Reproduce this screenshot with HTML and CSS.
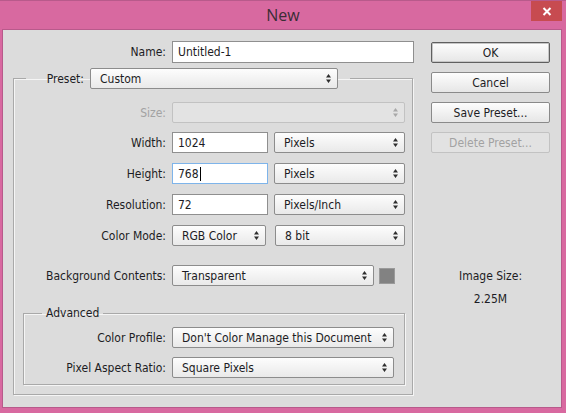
FILE: index.html
```html
<!DOCTYPE html>
<html>
<head>
<meta charset="utf-8">
<link rel="stylesheet" href="styles.css">
</head>
<body>
<div class="window">
  <div class="titlebar">
    <span></span>
    <span class="title">New</span>
    <button class="close" aria-label="Close"><svg width="10" height="9" viewBox="0 0 10 9"><path d="M1.5 1 L8.5 8 M8.5 1 L1.5 8" stroke="#fff" stroke-width="2" fill="none"/></svg></button>
  </div>
  <div class="client">
    <div class="main">
      <div class="row name-row">
        <span class="lbl lbl-name">Name:</span>
        <div class="input w-name">Untitled-1</div>
      </div>
      <fieldset class="group outer">
        <legend class="legend-preset">
          <span class="lbl-preset">Preset:</span>
          <div class="select w-preset"><span>Custom</span><svg class="arrow" width="5" height="9" viewBox="0 0 5 9"><path d="M0 3.5 L2.5 0 L5 3.5 Z M0 5.5 L2.5 9 L5 5.5 Z"/></svg></div>
        </legend>
        <div class="row r-size">
          <span class="lbl lbl-outer disabled">Size:</span>
          <div class="select w-size disabled"><span></span><svg class="arrow" width="5" height="9" viewBox="0 0 5 9"><path d="M0 3.5 L2.5 0 L5 3.5 Z M0 5.5 L2.5 9 L5 5.5 Z"/></svg></div>
        </div>
        <div class="row r-width">
          <span class="lbl lbl-outer">Width:</span>
          <div class="input w-num">1024</div>
          <div class="select w-unit"><span>Pixels</span><svg class="arrow" width="5" height="9" viewBox="0 0 5 9"><path d="M0 3.5 L2.5 0 L5 3.5 Z M0 5.5 L2.5 9 L5 5.5 Z"/></svg></div>
        </div>
        <div class="row r-gap">
          <span class="lbl lbl-outer">Height:</span>
          <div class="input w-num focus">768<span class="caret"></span></div>
          <div class="select w-unit"><span>Pixels</span><svg class="arrow" width="5" height="9" viewBox="0 0 5 9"><path d="M0 3.5 L2.5 0 L5 3.5 Z M0 5.5 L2.5 9 L5 5.5 Z"/></svg></div>
        </div>
        <div class="row r-gap">
          <span class="lbl lbl-outer">Resolution:</span>
          <div class="input w-num">72</div>
          <div class="select w-unit"><span>Pixels/Inch</span><svg class="arrow" width="5" height="9" viewBox="0 0 5 9"><path d="M0 3.5 L2.5 0 L5 3.5 Z M0 5.5 L2.5 9 L5 5.5 Z"/></svg></div>
        </div>
        <div class="row r-gap">
          <span class="lbl lbl-outer">Color Mode:</span>
          <div class="select w-mode"><span>RGB Color</span><svg class="arrow" width="5" height="9" viewBox="0 0 5 9"><path d="M0 3.5 L2.5 0 L5 3.5 Z M0 5.5 L2.5 9 L5 5.5 Z"/></svg></div>
          <div class="select w-bit"><span>8 bit</span><svg class="arrow" width="5" height="9" viewBox="0 0 5 9"><path d="M0 3.5 L2.5 0 L5 3.5 Z M0 5.5 L2.5 9 L5 5.5 Z"/></svg></div>
        </div>
        <div class="row r-bg">
          <span class="lbl lbl-outer">Background Contents:</span>
          <div class="select w-bg"><span>Transparent</span><svg class="arrow" width="5" height="9" viewBox="0 0 5 9"><path d="M0 3.5 L2.5 0 L5 3.5 Z M0 5.5 L2.5 9 L5 5.5 Z"/></svg></div>
          <div class="swatch"></div>
        </div>
        <fieldset class="group inner">
          <legend class="legend-adv">Advanced</legend>
          <div class="row">
            <span class="lbl lbl-inner">Color Profile:</span>
            <div class="select w-adv"><span>Don't Color Manage this Document</span><svg class="arrow" width="5" height="9" viewBox="0 0 5 9"><path d="M0 3.5 L2.5 0 L5 3.5 Z M0 5.5 L2.5 9 L5 5.5 Z"/></svg></div>
          </div>
          <div class="row r-gap2">
            <span class="lbl lbl-inner">Pixel Aspect Ratio:</span>
            <div class="select w-adv"><span>Square Pixels</span><svg class="arrow" width="5" height="9" viewBox="0 0 5 9"><path d="M0 3.5 L2.5 0 L5 3.5 Z M0 5.5 L2.5 9 L5 5.5 Z"/></svg></div>
          </div>
        </fieldset>
      </fieldset>
    </div>
    <div class="side">
      <button class="btn default">OK</button>
      <button class="btn">Cancel</button>
      <button class="btn">Save Preset...</button>
      <button class="btn disabled">Delete Preset...</button>
      <div class="info">
        <div class="info-label">Image Size:</div>
        <div class="info-value">2.25M</div>
      </div>
    </div>
  </div>
</div>
</body>
</html>
```

FILE: styles.css
```css
* { box-sizing: border-box; }
html, body {
  margin: 0;
  padding: 0;
}
body {
  width: 566px;
  height: 413px;
  background: #d869a0;
  font-family: "DejaVu Sans Condensed", "Liberation Sans", Arial, sans-serif;
  font-size: 12px;
  color: #1c1c24;
  overflow: hidden;
}
.window {
  width: 566px;
  height: 413px;
  display: flex;
  flex-direction: column;
  border-top: 1px solid #b85a8b;
}
.titlebar {
  height: 28px;
  display: grid;
  grid-template-columns: 1fr auto 1fr;
  align-items: start;
}
.title {
  font-family: "Open Sans", "Noto Sans", sans-serif;
  font-size: 16px;
  line-height: 28px;
  color: #3a2d35;
}
.close {
  justify-self: end;
  width: 31px;
  height: 20px;
  margin: 0 4px 0 0;
  padding: 0;
  border: none;
  background: #c74b50;
  display: flex;
  align-items: center;
  justify-content: center;
}
.client {
  margin: 0 4px 5px 2px;
  height: 379px;
  border: 1px solid #b85a8b;
  background: #dcdcdc;
  display: flex;
}
.main {
  width: 417px;
}
.side {
  width: 119px;
  margin-left: 11px;
  padding-top: 12px;
  display: flex;
  flex-direction: column;
}
.row {
  display: flex;
  align-items: center;
  height: 21px;
}
.lbl {
  text-align: right;
  margin-right: 6px;
  white-space: nowrap;
}
.lbl-name { width: 163px; }
.lbl-outer { width: 152px; }
.lbl-inner { width: 142px; }
.disabled { color: #a2a2a2; }
.name-row { margin-top: 11px; height: 22px; }

.input {
  height: 21px;
  background: #fff;
  border: 1px solid #8f8f8f;
  padding: 0 5px;
  display: flex;
  align-items: center;
  white-space: nowrap;
}
.name-row .input { height: 22px; }
.input.focus { border-color: #7eb4ea; }
.caret {
  display: inline-block;
  width: 1px;
  height: 14px;
  background: #000;
  margin-left: 1px;
}
.select {
  height: 21px;
  border: 1px solid #8c8c8c;
  border-radius: 2px;
  background: linear-gradient(#fdfdfd, #e9e9e9);
  padding: 0 6px 0 9px;
  display: flex;
  align-items: center;
  justify-content: space-between;
  white-space: nowrap;
}
.select .arrow { fill: #2e2e2e; flex: none; }
.select.disabled {
  border-color: #c2c2c2;
  background: #e3e3e3;
}
.select.disabled .arrow { fill: #a8a8a8; }

.w-name { width: 242px; }
.w-preset { width: 248px; margin-left: 6px; }
.w-size { width: 233px; }
.w-num { width: 96px; }
.w-unit { width: 131px; margin-left: 6px; }
.w-mode { width: 94px; }
.w-bit { width: 130px; margin-left: 9px; }
.w-bg { width: 202px; }
.w-adv { width: 222px; }
.swatch {
  width: 16px;
  height: 16px;
  margin-left: 5px;
  background: #828282;
  border: 1px solid #9a9a9a;
}

.group {
  margin: 0;
  padding: 0;
  min-width: 0;
  border: 1px solid #a9a9a9;
  box-shadow: inset 1px 1px 0 #f5f5f5, 1px 1px 0 #f5f5f5;
}
.outer {
  margin: 3px 0 0 10px;
  width: 400px;
  padding: 11px 0 0 0;
}
.legend-preset {
  margin: 4px 0 0 12px;
  padding: 0 12px 0 0;
  display: flex;
  align-items: center;
  height: 25px;
}
.lbl-preset {
  width: 58px;
  text-align: right;
}
.r-width { margin-top: 9px; }
.r-gap { margin-top: 10px; }
.r-bg { margin-top: 19px; }
.inner {
  margin: 20px 0 9px 9px;
  width: 382px;
  padding: 7px 0 6px 0;
}
.legend-adv {
  margin-left: 18px;
  padding: 0 4px;
  line-height: 14px;
}
.r-gap2 { margin-top: 9px; }

.btn {
  height: 21px;
  width: 119px;
  margin: 0 0 9px 0;
  padding: 0;
  font-family: inherit;
  font-size: 12px;
  color: #1c1c24;
  border: 1px solid #8a8a8a;
  border-radius: 2px;
  background: linear-gradient(#fdfdfd, #e6e6e6);
}
.btn.default {
  border-color: #5f5f5f;
  box-shadow: inset 0 0 0 1px #c6c6c6;
}
.btn.disabled {
  color: #a2a2a2;
  border-color: #c2c2c2;
  background: #e2e2e2;
}
.info {
  margin-top: 107px;
  text-align: center;
  line-height: 14px;
}
.info-value { margin-top: 9px; }
```
